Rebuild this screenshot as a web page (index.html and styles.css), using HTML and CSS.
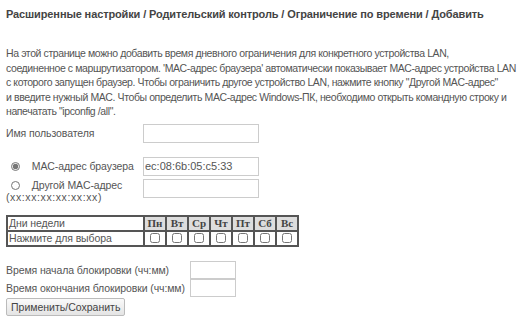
FILE: index.html
```html
<!DOCTYPE html>
<html lang="ru">
<head>
  <meta charset="UTF-8">
  <title>Ограничение по времени</title>
  <link rel="stylesheet" href="styles.css">
</head>
<body>
  <h1 class="titulo">Расширенные настройки / Родительский контроль / Ограничение по времени / Добавить</h1>

  <p class="descricao">На этой странице можно добавить время дневного ограничения для конкретного устройства LAN,<br>
    соединенное с маршрутизатором. 'MAC-адрес браузера' автоматически показывает MAC-адрес устройства LAN<br>
    с которого запущен браузер. Чтобы ограничить другое устройство LAN, нажмите кнопку "Другой MAC-адрес"<br>
    и введите нужный MAC. Чтобы определить MAC-адрес Windows-ПК, необходимо открыть командную строку и<br>
    напечатать "ipconfig /all".</p>

  <form class="form-limite">
    <div class="linha linha-usuario">
      <label for="usuario">Имя пользователя</label>
      <input type="text" id="usuario" class="campo">
    </div>

    <div class="linha linha-mac">
      <label class="radio"><input type="radio" name="mac" checked> MAC-адрес браузера</label>
      <input type="text" class="campo" value="ec:08:6b:05:c5:33">
    </div>
    <div class="linha linha-outro">
      <label class="radio"><input type="radio" name="mac"> Другой MAC-адрес<br><span class="formato">(xx:xx:xx:xx:xx:xx)</span></label>
      <input type="text" class="campo">
    </div>

    <table class="dias">
      <tr>
        <td class="rotulo">Дни недели</td>
        <th>Пн</th><th>Вт</th><th>Ср</th><th>Чт</th><th>Пт</th><th>Сб</th><th>Вс</th>
      </tr>
      <tr>
        <td class="rotulo">Нажмите для выбора</td>
        <td><input type="checkbox"></td>
        <td><input type="checkbox"></td>
        <td><input type="checkbox"></td>
        <td><input type="checkbox"></td>
        <td><input type="checkbox"></td>
        <td><input type="checkbox"></td>
        <td><input type="checkbox"></td>
      </tr>
    </table>

    <div class="horarios">
      <label for="inicio">Время начала блокировки (чч:мм)</label>
      <input type="text" id="inicio" class="campo-hora">
      <label for="fim">Время окончания блокировки (чч:мм)</label>
      <input type="text" id="fim" class="campo-hora">
    </div>

    <button type="button" class="botao">Применить/Сохранить</button>
  </form>
</body>
</html>
```

FILE: styles.css
```css
* {
  margin: 0;
  padding: 0;
  box-sizing: border-box;
}

body {
  font-family: 'Liberation Sans', Arial, sans-serif;
  font-size: 10.5px;
  letter-spacing: -0.1px;
  color: #555;
  background-color: #fff;
  padding: 7px 6px;
}

.titulo {
  font-size: 11px;
  font-weight: bold;
  color: #444;
  line-height: 14px;
  letter-spacing: -0.12px;
}

/* texto quebrado nas mesmas linhas do original */
.descricao {
  margin-top: 25px;
  letter-spacing: -0.4px;
  line-height: 14.5px;
  white-space: nowrap;
}

.form-limite {
  margin-top: 5px;
}

.linha {
  display: grid;
  grid-template-columns: 137px 116px;
  align-items: center;
}

.linha-mac {
  margin-top: 14px;
}

.linha-outro {
  margin-top: 3px;
  align-items: start;
}

.radio input {
  margin: 0 9px 0 5px;
  width: 9px;
  height: 9px;
  vertical-align: -1px;
  accent-color: #777;
}

.formato {
  letter-spacing: 0.6px;
}

.campo {
  height: 19px;
  border: 1px solid #ccc;
  font-family: inherit;
  font-size: 11px;
  color: #555;
  padding: 0 1px;
}

.dias {
  margin-top: 12px;
  border-collapse: separate;
  border-spacing: 0;
  border: 1px solid #555;
}

.dias td,
.dias th {
  border: 1px solid #555;
  height: 15px;
  padding: 0;
}

.dias .rotulo {
  width: 137px;
  padding-left: 1px;
  text-align: left;
}

.dias th {
  width: 22px;
  background-color: #ddd;
  font-family: 'Liberation Serif', 'Times New Roman', serif;
  font-weight: bold;
  font-size: 11px;
  letter-spacing: 0;
  color: #444;
  text-align: center;
}

.dias td input {
  display: block;
  margin: 0 auto;
  width: 10px;
  height: 10px;
}

.horarios {
  margin-top: 14px;
  display: grid;
  grid-template-columns: 179px 46px;
  column-gap: 5px;
  align-items: center;
}

.horarios label {
  white-space: nowrap;
}

.campo-hora {
  height: 18px;
  border: 1px solid #ccc;
}

.botao {
  margin-top: 1px;
  height: 18px;
  padding: 0 4px;
  font-family: inherit;
  font-size: 10.5px;
  color: #444;
  background: linear-gradient(#fafafa, #e4e4e4);
  border: 1px solid #bbb;
  border-radius: 2px;
}
```
